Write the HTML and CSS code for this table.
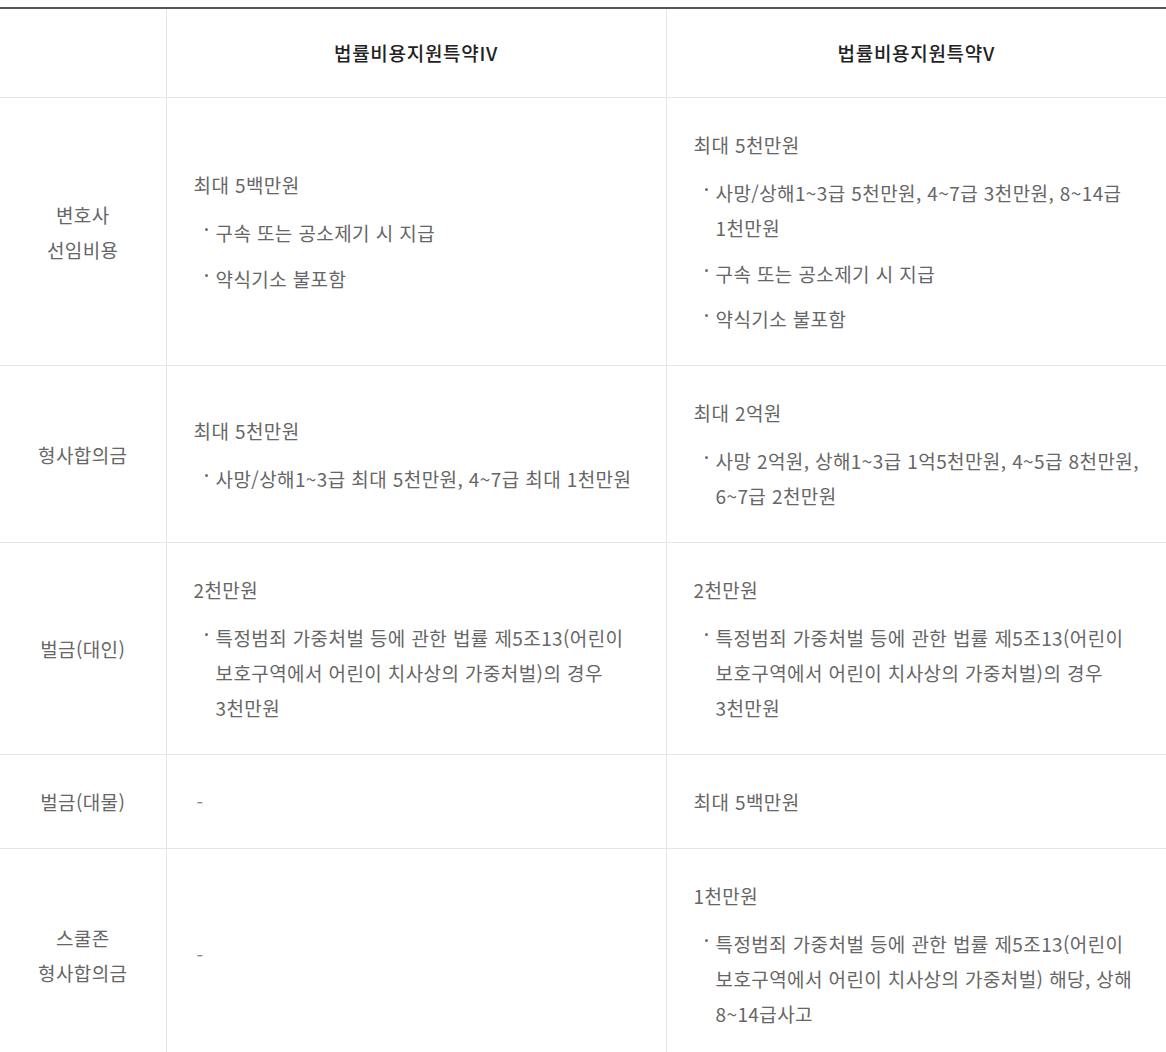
FILE: index.html
```html
<!DOCTYPE html>
<html lang="ko">
<head>
<meta charset="utf-8">
<title>법률비용지원특약 비교</title>
<link rel="stylesheet" href="styles.css">
</head>
<body>
<div class="wrap">
<table class="cmp">
  <colgroup><col class="c-label"><col><col></colgroup>
  <thead>
    <tr><th class="corner"></th><th>법률비용지원특약IV</th><th>법률비용지원특약V</th></tr>
  </thead>
  <tbody>
    <tr>
      <th class="label">변호사<br>선임비용</th>
      <td>
        <p class="amt">최대 5백만원</p>
        <ul class="notes"><li>구속 또는 공소제기 시 지급</li><li>약식기소 불포함</li></ul>
      </td>
      <td>
        <p class="amt">최대 5천만원</p>
        <ul class="notes"><li><span>사망/상해1~3급 5천만원, 4~7급 3천만원, 8~14급<br>1천만원</span></li><li>구속 또는 공소제기 시 지급</li><li>약식기소 불포함</li></ul>
      </td>
    </tr>
    <tr>
      <th class="label">형사합의금</th>
      <td>
        <p class="amt">최대 5천만원</p>
        <ul class="notes"><li>사망/상해1~3급 최대 5천만원, 4~7급 최대 1천만원</li></ul>
      </td>
      <td>
        <p class="amt">최대 2억원</p>
        <ul class="notes"><li><span>사망 2억원, 상해1~3급 1억5천만원, 4~5급 8천만원,<br>6~7급 2천만원</span></li></ul>
      </td>
    </tr>
    <tr>
      <th class="label">벌금(대인)</th>
      <td>
        <p class="amt">2천만원</p>
        <ul class="notes"><li><span>특정범죄 가중처벌 등에 관한 법률 제5조13(어린이<br>보호구역에서 어린이 치사상의 가중처벌)의 경우<br>3천만원</span></li></ul>
      </td>
      <td>
        <p class="amt">2천만원</p>
        <ul class="notes"><li><span>특정범죄 가중처벌 등에 관한 법률 제5조13(어린이<br>보호구역에서 어린이 치사상의 가중처벌)의 경우<br>3천만원</span></li></ul>
      </td>
    </tr>
    <tr>
      <th class="label">벌금(대물)</th>
      <td><p class="amt none">-</p></td>
      <td><p class="amt">최대 5백만원</p></td>
    </tr>
    <tr>
      <th class="label">스쿨존<br>형사합의금</th>
      <td><p class="amt none">-</p></td>
      <td>
        <p class="amt">1천만원</p>
        <ul class="notes"><li><span>특정범죄 가중처벌 등에 관한 법률 제5조13(어린이<br>보호구역에서 어린이 치사상의 가중처벌) 해당, 상해<br>8~14급사고</span></li></ul>
      </td>
    </tr>
  </tbody>
</table>
</div>
</body>
</html>
```

FILE: styles.css
```css
html, body {
  margin: 0;
  padding: 0;
  background: #fff;
}

body {
  font-family: "Noto Sans CJK KR", "Noto Sans", sans-serif;
  color: #666;
}

.wrap {
  padding-top: 7px;
}

.cmp {
  width: 1166px;
  border-collapse: collapse;
  table-layout: fixed;
  border-top: 2px solid #555;
}

.c-label {
  width: 166px;
}

.cmp th,
.cmp td {
  border: 1px solid #e6e6e6;
  font-size: 19px;
  line-height: 35px;
  letter-spacing: 0.4px;
  vertical-align: middle;
}

.cmp tr > :first-child {
  border-left: none;
}

.cmp tr > :last-child {
  border-right: none;
}

.cmp thead th {
  border-top: none;
  padding: 26px 0 27px;
  font-weight: 500;
  color: #222;
  text-align: center;
  letter-spacing: 0.7px;
}

.cmp tbody th.label {
  font-weight: 400;
  color: #666;
  text-align: center;
  padding: 29px 0;
}

.cmp tbody td {
  padding: 29px 14px 29px 27px;
  color: #666;
}

.amt {
  margin: 0;
}

.amt.none {
  color: #888;
  padding-left: 3px;
}

.notes {
  list-style: none;
  margin: 13px 0 0;
  padding: 0;
}

.notes li {
  display: flex;
  white-space: nowrap;
}

.notes li + li {
  margin-top: 10.5px;
}

.notes li::before {
  content: "";
  flex: none;
  width: 3px;
  height: 3px;
  margin: 13px 8px 0 11px;
  background: #6f6f6f;
  border-radius: 50%;
}
```
